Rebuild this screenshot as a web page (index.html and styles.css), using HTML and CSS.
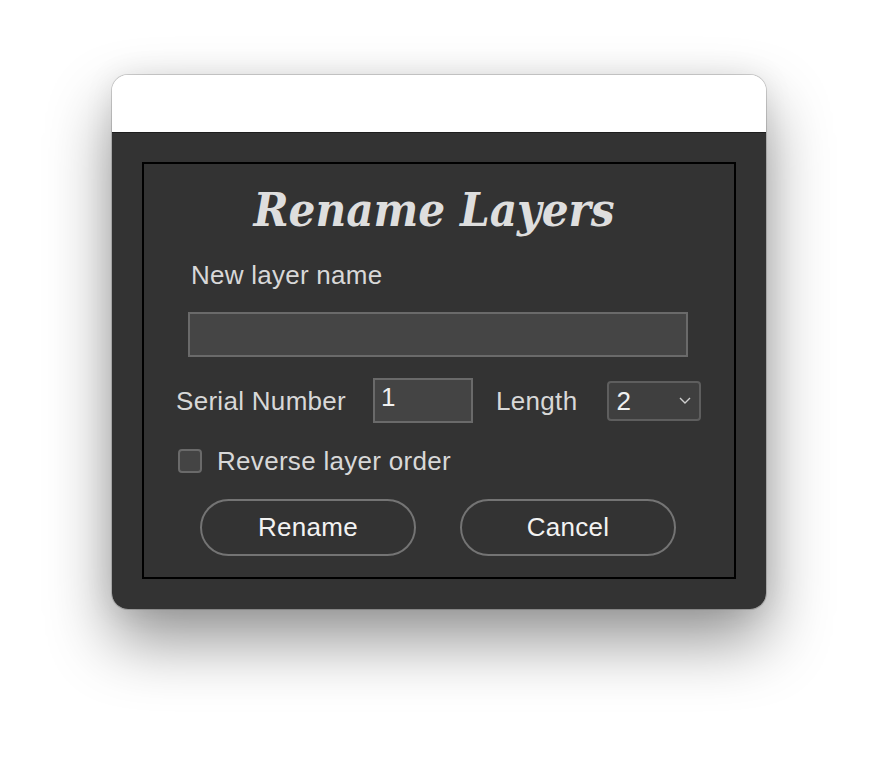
FILE: index.html
```html
<!DOCTYPE html>
<html lang="en">
  <head>
    <meta charset="UTF-8" />
    <meta name="viewport" content="width=device-width, initial-scale=1.0" />
    <title>Rename Layers</title>
    <link rel="stylesheet" href="styles.css">
  </head>
  <body>
    <div class="window">
      <div class="title-bar"></div>

      <div class="window-body">
        <div class="panel">
          <h1 class="panel-title">Rename Layers</h1>

          <label class="field-label" for="layerName">New layer name</label>
          <input type="text" id="layerName" class="text-field" />

          <div class="serial-row">
            <label class="row-label" for="serial">Serial Number</label>
            <input type="text" id="serial" class="number-field" value="1" />
            <span class="row-label length-label">Length</span>
            <div class="dropdown">
              <span>2</span>
              <svg width="12" height="7" viewBox="0 0 12 7">
                <path d="M1 1 L6 6 L11 1" fill="none" stroke="#cfcfcf" stroke-width="1.4" />
              </svg>
            </div>
          </div>

          <!-- Reverse order option -->
          <div class="check-row">
            <span class="check-box"></span>
            <span class="row-label">Reverse layer order</span>
          </div>

          <div class="button-row">
            <button class="pill-button">Rename</button>
            <button class="pill-button">Cancel</button>
          </div>
        </div>
      </div>
    </div>
  </body>
</html>
```

FILE: styles.css
```css
html {
  background-color: #ffffff;
}

body {
  box-sizing: border-box;
  min-height: 758px;
  margin: 0;
  padding: 75px 0 0 112px;
  font-family: "Liberation Sans", Arial, sans-serif;
}

.window {
  width: 654px;
  border-radius: 16px;
  overflow: hidden;
  box-shadow: 0 0 0 1px rgba(0, 0, 0, 0.16), 0 32px 64px rgba(0, 0, 0, 0.42),
    0 0 30px rgba(0, 0, 0, 0.08);
}

.title-bar {
  height: 57px;
  background-color: #ffffff;
  border-bottom: 1px solid #1e1e1e;
}

.window-body {
  background-color: #333333;
  padding: 29px 30px 30px;
}

.panel {
  border: 2px solid #000000;
  padding: 18px 0 21px;
  display: flex;
  flex-direction: column;
}

.panel-title {
  margin: 0;
  font-family: "DejaVu Serif Condensed", "DejaVu Serif", serif;
  font-stretch: condensed;
  font-style: italic;
  font-weight: bold;
  font-size: 47px;
  line-height: 56px;
  color: #dedede;
  text-align: center;
  padding-right: 10px;
}

.field-label {
  margin: 22px 0 0 47px;
  font-size: 26px;
  line-height: 30px;
  letter-spacing: 0.25px;
  color: #d8d8d8;
}

.text-field {
  box-sizing: border-box;
  width: 500px;
  height: 45px;
  margin: 22px 0 0 44px;
  background-color: #454545;
  border: 2px solid #6a6a6a;
  outline: none;
}

.serial-row {
  display: flex;
  align-items: center;
  margin: 21px 0 0 32px;
  height: 45px;
}

.row-label {
  font-size: 26px;
  line-height: 30px;
  letter-spacing: 0.3px;
  color: #d8d8d8;
  white-space: nowrap;
}

.number-field {
  box-sizing: border-box;
  width: 100px;
  height: 45px;
  margin-left: 27px;
  padding: 0 6px 6px;
  background-color: #444444;
  border: 2px solid #6a6a6a;
  color: #f0f0f0;
  font-family: "Liberation Sans", Arial, sans-serif;
  font-size: 26px;
  line-height: 30px;
  outline: none;
}

.length-label {
  margin-left: 23px;
}

.dropdown {
  box-sizing: border-box;
  width: 94px;
  height: 40px;
  margin-left: 30px;
  padding: 0 8px 0 7px;
  display: flex;
  align-items: center;
  justify-content: space-between;
  background-color: #3f3f3f;
  border: 2px solid #5e5e5e;
  border-radius: 4px;
  color: #f0f0f0;
  font-size: 26px;
  line-height: 30px;
}

.check-row {
  display: flex;
  align-items: center;
  gap: 15px;
  margin: 23px 0 0 34px;
}

.check-box {
  box-sizing: border-box;
  width: 24px;
  height: 24px;
  background-color: #444444;
  border: 2px solid #6a6a6a;
  border-radius: 4px;
}

.button-row {
  display: flex;
  justify-content: center;
  gap: 44px;
  margin-top: 23px;
  padding-right: 2px;
}

.pill-button {
  box-sizing: border-box;
  width: 216px;
  height: 57px;
  background-color: transparent;
  border: 2px solid #747474;
  border-radius: 29px;
  color: #f2f2f2;
  font-family: "Liberation Sans", Arial, sans-serif;
  font-size: 26px;
  letter-spacing: 0.3px;
  cursor: pointer;
}
```
